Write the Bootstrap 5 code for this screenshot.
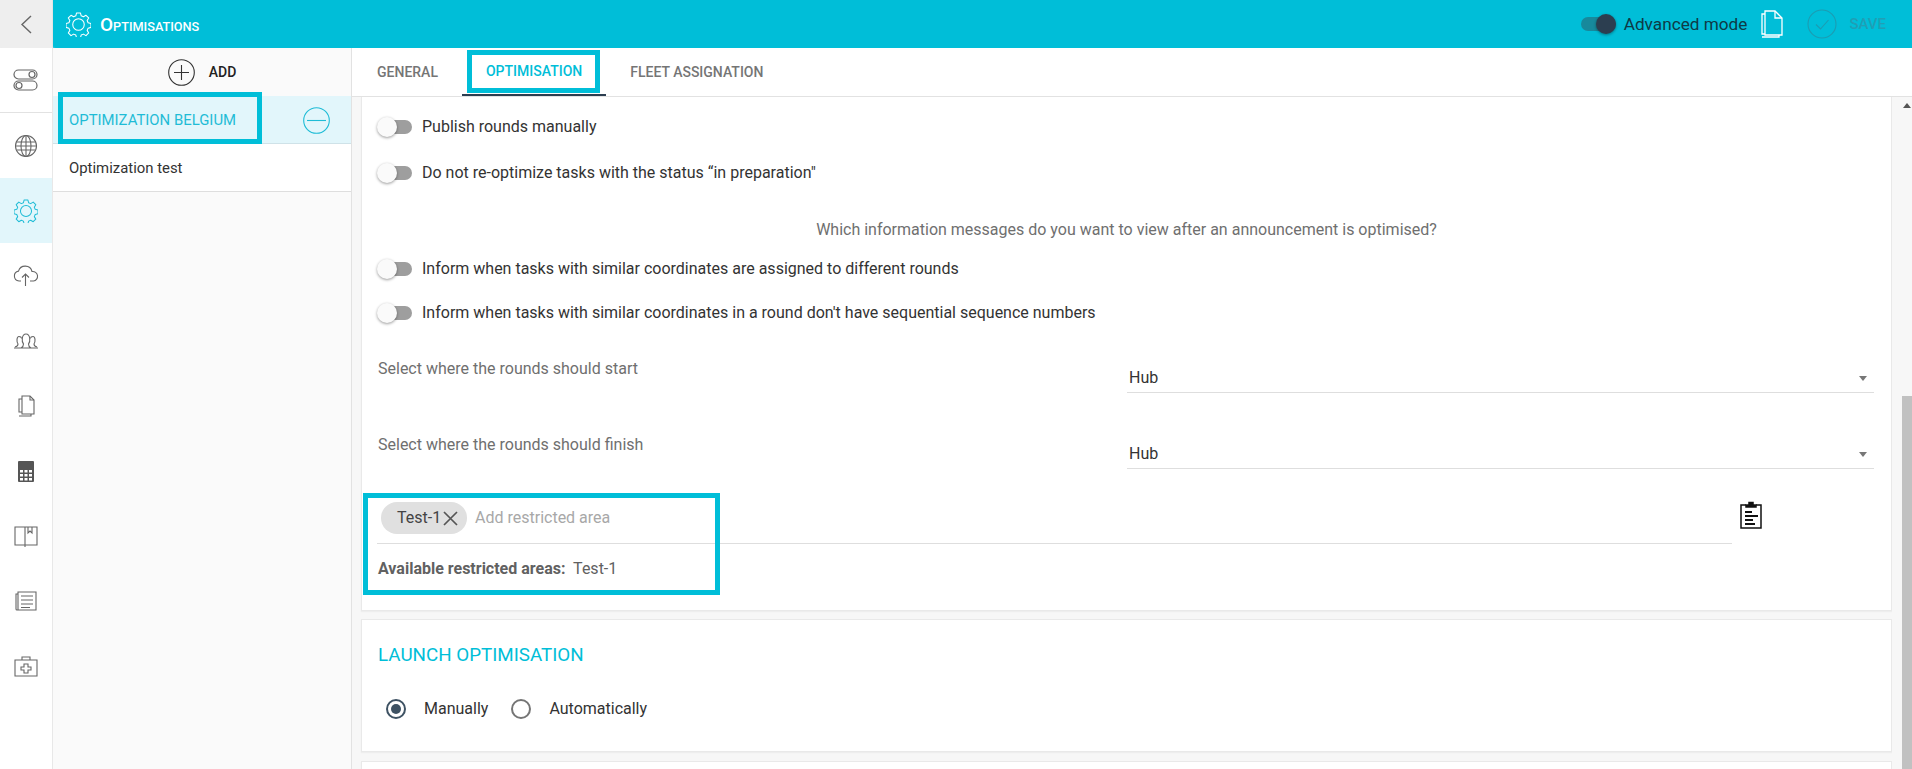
<!DOCTYPE html>
<html lang="en">
<head>
<meta charset="utf-8">
<title>Optimisations</title>
<link href="https://cdn.jsdelivr.net/npm/bootstrap@5.3.0/dist/css/bootstrap.min.css" rel="stylesheet">
<style>
html,body{height:100%;overflow:hidden}
body{font-family:Roboto,"Liberation Sans",sans-serif;font-size:16px;line-height:24px;color:#333;background:#fff}
.app-top{height:48px;background:#00bed8}
.back-cell{width:53px;height:48px;background:#eee;border-right:1px solid #e4e4e4}
.page-name{text-transform:uppercase;font-weight:500;font-size:12.7px;color:#fff;margin-left:9px;line-height:1;display:block}
.page-name::first-letter{font-size:19px}
.head-gear{margin-left:13px}
.adv-text{font-size:17.2px;color:#0e3a46;margin-left:8px;margin-right:14px}
.save-text{font-size:15px;font-weight:500;color:#1f9fb5;margin-left:12px;margin-right:26px}
.check-ico{margin-left:23px}
.main-row{height:721px}
.rail{width:53px;border-right:1px solid #e8e8e8;box-shadow:1px 0 2px #eee;flex:none}
.rail-item{height:65.1px;display:flex;align-items:center;justify-content:center}
.rail-first{border-bottom:1px solid #e2e2e2}
.rail-active{background:#e2f6fb}
.list-pane{width:299px;flex:none;background:#fafafa;border-right:1px solid #e2e2e2;position:relative}
.add-row{height:48px;font-size:14px;font-weight:500;color:#222}
.add-row span{margin-left:14px}
.opt-row{height:48px;padding:1px 21px 0 16px;border-bottom:1px solid #dedede;background:#fff;font-size:14.9px;color:#333}
.opt-active{background:#e2f6fb;color:#1fbcd6;border-bottom-color:#cfe2e8}
.mark-box{position:absolute;border:5px solid #00bed8;pointer-events:none}
.box-list{left:5px;top:44px;width:204px;height:52px}
.work{flex:1;min-width:0;background:#f7f7f7;display:flex;flex-direction:column;position:relative}
.tab-bar{height:49px;background:#fff;border-bottom:1px solid #e2e2e2;flex:none;padding-left:9px}
.tab-one{height:48px;display:flex;align-items:center;font-size:14px;font-weight:500;color:#757575;padding:0 24px 0 16px}
.tab-cur{color:#00bed8;border-bottom:2px solid #2c3e50;padding:0 24px}
.tab-third{padding-left:24px}
.box-tab{left:115px;top:2px;width:133px;height:43px}
.scroll-zone{flex:1;min-height:0;overflow:hidden;padding:0 20px 0 9px;position:relative}
.panel-sheet{background:#fff;border:1px solid #e9e9e9;box-shadow:0 1px 1px #eee;position:relative}
.sheet-one{height:514px;border-top:0;padding:7px 15px 0;margin-bottom:8px}
.sheet-two{height:133px;padding:24px 15px 0;margin-bottom:9px}
.sheet-three{height:40px}
.tog-row{height:46px;color:#333}
.tog-tight{height:44px}
.tog{width:35px;height:20px;position:relative;flex:none;margin-right:10px}
.tog::before{content:"";position:absolute;left:2px;right:0;top:3px;bottom:3px;border-radius:7px;background:#9e9e9e}
.tog::after{content:"";position:absolute;left:0;top:0;width:20px;height:20px;border-radius:50%;background:#fafafa;box-shadow:0 1px 3px rgba(0,0,0,.4)}
.tog-on::before{background:#17899c;left:0}
.tog-on::after{left:15px;background:#2c3e50}
.tog-on{margin-right:0}
.info-title{color:#6f6f6f;text-align:center;margin:22px 0 5px}
.sel-row{height:76px;margin-top:0}
.sel-first{margin-top:14px}
.sel-label{color:#6f6f6f;width:750px;flex:none;padding:8px 0 0 1px}
.sel-low{padding-top:8px}
.sel-field{flex:1;margin-right:2px;border-bottom:1px solid #dedede;height:44px;display:flex;align-items:flex-end;padding:0 5px 2px 2px;color:#333;justify-content:space-between}
.caret-down{width:0;height:0;border:4px solid transparent;border-top:5px solid #777;border-bottom:0;margin:0 2px 9px 0}
.chip-line{border-bottom:1px solid #dedede;height:43px;width:1355px;padding:1px 0 0 4px;align-items:flex-start}
.chip-one{height:32px;width:86px;border-radius:16px;background:#e0e0e0;color:#444;padding-left:16px}
.chip-one svg{margin-left:2px}
.chip-hint{color:#a8a8a8;margin-left:8px;line-height:32px}
.avail-line{margin-top:13px;color:#616161;padding-left:1px}
.avail-line b{font-weight:700;margin-right:4px}
.box-chips{left:1px;top:396px;width:357px;height:102px}
.clip-ico{position:absolute;left:1378px;top:404px}
.launch-title{font-size:18.8px;color:#00bed8;line-height:23px;margin-bottom:30px;padding-left:1px}
.rad{width:20px;height:20px;border-radius:50%;border:2px solid #757575;flex:none;position:relative;margin-left:9px;margin-right:18px}
.rad-on{border-color:#3e5263}
.rad-on::after{content:"";position:absolute;inset:3px;border-radius:50%;background:#3e5263}
.rad-gap{margin-left:23px}
.scroll-lane{position:absolute;right:0;top:0;bottom:0;width:20px;background:#f7f7f7}
.scroll-arrow{position:absolute;right:1px;top:6px;width:0;height:0;border:4px solid transparent;border-bottom:5px solid #555;border-top:0}
.scroll-thumb{position:absolute;right:0;width:10px;top:299px;bottom:0;background:#c1c1c1}
</style>
</head>
<body>
<div class="d-flex flex-column h-100">
  <header class="app-top d-flex align-items-center">
    <div class="back-cell d-flex align-items-center justify-content-center">
      <svg width="14" height="20" viewBox="0 0 14 20" fill="none" stroke="#666" stroke-width="1.4"><path d="M12 2 3 10.500l9 8.500"/></svg>
    </div>
    <svg class="head-gear" width="25" height="25" viewBox="0 0 26 26" fill="none" stroke="#fff" stroke-width="1.100"><circle cx="13" cy="13" r="6"/><path d="M11 1h4l.8 3 2.300 1 2.700-1.600 2.800 2.800-1.600 2.700 1 2.300 3 .8v4l-3 .8-1 2.300 1.600 2.700-2.800 2.800-2.700-1.600-2.300 1-.8 3h-4l-.8-3-2.300-1-2.700 1.600-2.800-2.800 1.600-2.700-1-2.300-3-.8v-4l3-.8 1-2.300-1.600-2.700 2.800-2.800 2.700 1.600 2.300-1z" stroke-linejoin="round"/></svg>
    <div class="page-name">Optimisations</div>
    <div class="ms-auto d-flex align-items-center">
      <div class="tog tog-on"></div>
      <span class="adv-text">Advanced mode</span>
      <svg width="23" height="28" viewBox="0 0 23 28" fill="none" stroke="#fff" stroke-width="1.300"><path d="M4 1h10l7 7v17H4z"/><path d="M14 1v7h7"/><path d="M4 24H1V4h3M1 27h17v-2"/></svg>
      <svg class="check-ico" width="30" height="30" viewBox="0 0 30 30" fill="none" stroke="#1b9cb2" stroke-width="1.100"><circle cx="15" cy="15" r="14"/><path d="m9 15.500 4.500 4.500 8-9"/></svg>
      <span class="save-text">SAVE</span>
    </div>
  </header>
  <div class="main-row d-flex">
    <nav class="rail">
      <div class="rail-item rail-first">
        <svg width="26" height="24" viewBox="0 0 26 24" fill="none" stroke="#666" stroke-width="1.200"><rect x="1" y="2" width="23" height="9" rx="4.500"/><circle cx="19" cy="6.500" r="3"/><rect x="1" y="13" width="23" height="9" rx="4.500"/><circle cx="6" cy="17.500" r="3"/></svg>
      </div>
      <div class="rail-item">
        <svg width="24" height="24" viewBox="0 0 24 24" fill="none" stroke="#666" stroke-width="1.100"><circle cx="12" cy="12" r="10.500"/><ellipse cx="12" cy="12" rx="5" ry="10.500"/><path d="M12 1.500v21M2.500 8h19M2.500 16h19M1.500 12h21"/></svg>
      </div>
      <div class="rail-item rail-active">
        <svg width="24" height="24" viewBox="0 0 26 26" fill="none" stroke="#1fbcd6" stroke-width="1.100"><circle cx="13" cy="13" r="6"/><path d="M11 1h4l.8 3 2.300 1 2.700-1.600 2.800 2.800-1.600 2.700 1 2.300 3 .8v4l-3 .8-1 2.300 1.600 2.700-2.800 2.800-2.700-1.600-2.300 1-.8 3h-4l-.8-3-2.300-1-2.700 1.600-2.800-2.800 1.600-2.700-1-2.300-3-.8v-4l3-.8 1-2.300-1.600-2.700 2.800-2.800 2.700 1.600 2.300-1z" stroke-linejoin="round"/></svg>
      </div>
      <div class="rail-item">
        <svg width="26" height="22" viewBox="0 0 26 22" fill="none" stroke="#666" stroke-width="1.100"><path d="M8 16H6a5 5 0 0 1-.5-9.900A7 7 0 0 1 19 6.500 4.800 4.800 0 0 1 20.500 16H17"/><path d="M12.500 21V9M9 12.500 12.500 9l3.500 3.500"/></svg>
      </div>
      <div class="rail-item">
        <svg width="26" height="16" viewBox="0 0 26 16" fill="none" stroke="#666" stroke-width="1.100"><path d="M1 15h24M8 15c2-1 2.500-2 2.500-4C8.500 9 8.500 1 13 1s4.500 8 2.500 10c0 2 .5 3 2.500 4"/><path d="M2 14c2-.5 3-1.500 3-3C3.500 9 3.500 3.500 6 3.500c1.500 0 2.500 1 2.700 2M24 14c-2-.5-3-1.500-3-3 1.500-2 1.500-7.500-1-7.500-1.500 0-2.500 1-2.700 2"/></svg>
      </div>
      <div class="rail-item">
        <svg width="17" height="22" viewBox="0 0 17 22" fill="none" stroke="#666" stroke-width="1.100"><path d="M4 1h8l4 4v14H4z"/><path d="M12 1v4h4M4 17H1V4h3M1 21h12v-2"/></svg>
      </div>
      <div class="rail-item">
        <svg width="16" height="21" viewBox="0 0 16 21"><rect width="16" height="21" rx="1" fill="#555"/><path d="M2 9h3v2.500H2zM6.500 9h3v2.500h-3zM11 9h3v2.500h-3zM2 13h3v2.500H2zM6.500 13h3v2.500h-3zM11 13h3v2.500h-3zM2 17h3v2.500H2zM6.500 17h3v2.500h-3zM11 17h3v2.500h-3z" fill="#fff"/></svg>
      </div>
      <div class="rail-item">
        <svg width="24" height="21" viewBox="0 0 24 21" fill="none" stroke="#666" stroke-width="1.100"><path d="M1 1h22v18H1zM11 1v20M14 1v6l2-2 2 2V1"/></svg>
      </div>
      <div class="rail-item">
        <svg width="22" height="20" viewBox="0 0 22 20" fill="none" stroke="#666" stroke-width="1.100"><path d="M3 1h18v18H2c-1 0-1-.5-1-1V3h2zM3 1v18M6 5h12M6 9h12M6 13h12M6 16.500h9"/></svg>
      </div>
      <div class="rail-item">
        <svg width="24" height="21" viewBox="0 0 24 21" fill="none" stroke="#666" stroke-width="1.100"><path d="M1 4h22v16H1zM8 4V1h8v3"/><path d="M10 8h4v3h3v3h-3v3h-4v-3H7v-3h3z"/></svg>
      </div>
    </nav>
    <aside class="list-pane">
      <div class="add-row d-flex align-items-center justify-content-center">
        <svg width="27" height="27" viewBox="0 0 27 27" fill="none" stroke="#333" stroke-width="1.100"><circle cx="13.500" cy="13.500" r="12.800"/><path d="M13.500 6v15M6 13.500h15"/></svg>
        <span>ADD</span>
      </div>
      <div class="opt-row opt-active d-flex align-items-center justify-content-between">
        <span>OPTIMIZATION BELGIUM</span>
        <svg width="27" height="27" viewBox="0 0 27 27" fill="none" stroke="#1fbcd6" stroke-width="1.100"><circle cx="13.500" cy="13.500" r="12.800"/><path d="M4 13.500h19"/></svg>
      </div>
      <div class="opt-row d-flex align-items-center">Optimization test</div>
      <div class="mark-box box-list"></div>
    </aside>
    <main class="work">
      <div class="tab-bar d-flex">
        <div class="tab-one">GENERAL</div>
        <div class="tab-one tab-cur">OPTIMISATION</div>
        <div class="tab-one tab-third">FLEET ASSIGNATION</div>
      </div>
      <div class="mark-box box-tab"></div>
      <div class="scroll-zone">
        <section class="panel-sheet sheet-one">
          <div class="tog-row d-flex align-items-center"><div class="tog"></div><span>Publish rounds manually</span></div>
          <div class="tog-row d-flex align-items-center"><div class="tog"></div><span>Do not re-optimize tasks with the status “in preparation"</span></div>
          <div class="info-title">Which information messages do you want to view after an announcement is optimised?</div>
          <div class="tog-row tog-tight d-flex align-items-center"><div class="tog"></div><span>Inform when tasks with similar coordinates are assigned to different rounds</span></div>
          <div class="tog-row tog-tight d-flex align-items-center"><div class="tog"></div><span>Inform when tasks with similar coordinates in a round don't have sequential sequence numbers</span></div>
          <div class="sel-row sel-first d-flex"><div class="sel-label">Select where the rounds should start</div><div class="sel-field"><span>Hub</span><i class="caret-down"></i></div></div>
          <div class="sel-row d-flex"><div class="sel-label sel-low">Select where the rounds should finish</div><div class="sel-field"><span>Hub</span><i class="caret-down"></i></div></div>
          <div class="chip-line d-flex">
            <div class="chip-one d-flex align-items-center">Test-1<svg width="15" height="15" viewBox="0 0 15 15" stroke="#555" stroke-width="1.700"><path d="m1 1 13 13M14 1 1 14"/></svg></div>
            <span class="chip-hint">Add restricted area</span>
          </div>
          <div class="avail-line"><b>Available restricted areas:</b> Test-1</div>
          <div class="mark-box box-chips"></div>
          <svg class="clip-ico" width="22" height="28" viewBox="0 0 22 28" fill="none" stroke="#111" stroke-width="1.500"><path d="M6 4H1v23h20V4h-5"/><path d="M6 6h10V4h-3V1.500h-4V4H6z" fill="#111"/><path d="M5 11h7M5 15h13M5 19h8M5 23h10" stroke-width="2"/></svg>
        </section>
        <section class="panel-sheet sheet-two">
          <div class="launch-title">LAUNCH OPTIMISATION</div>
          <div class="d-flex align-items-center">
            <div class="rad rad-on"></div><span>Manually</span>
            <div class="rad rad-gap"></div><span>Automatically</span>
          </div>
        </section>
        <section class="panel-sheet sheet-three"></section>
        <div class="scroll-lane"><i class="scroll-arrow"></i><div class="scroll-thumb"></div></div>
      </div>
    </main>
  </div>
</div>
<script src="https://cdn.jsdelivr.net/npm/bootstrap@5.3.0/dist/js/bootstrap.bundle.min.js"></script>
</body>
</html>
